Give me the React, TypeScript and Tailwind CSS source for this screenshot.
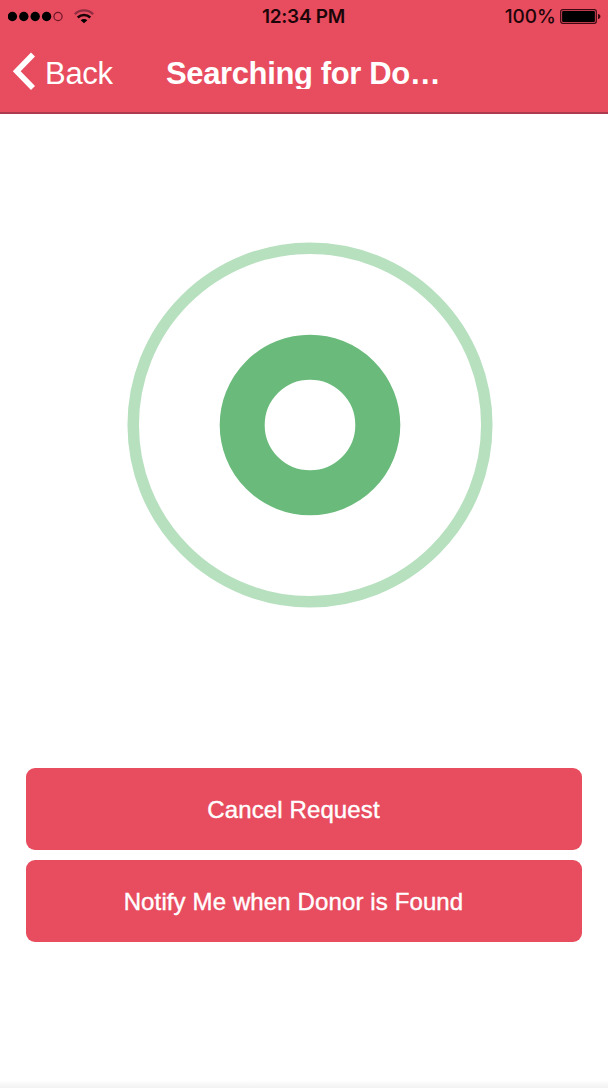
const StatusBar = () => (
  <div className="flex h-8 items-center pl-2 pr-[7px] font-['Inter',sans-serif] text-black">
    <div className="flex flex-1 items-center">
      <svg className="h-[11px] w-[56px]" viewBox="0 0 56 11">
        <circle cx="4.400" cy="5.500" r="4.700" />
        <circle cx="15.800" cy="5.500" r="4.700" />
        <circle cx="27.200" cy="5.500" r="4.700" />
        <circle cx="38.600" cy="5.500" r="4.700" />
        <circle cx="50" cy="5.500" r="4.100" fill="none" stroke="#6d1428" strokeWidth="1.200" />
      </svg>
      <svg className="ml-[10px] h-[15px] w-5" viewBox="0 0 20 15" fill="none">
        <path d="M.8 5.200a13.200 13.200 0 0 1 18.400 0" stroke="#902c40" strokeWidth="2.200" />
        <path d="M3.700 8.500a9 9 0 0 1 12.600 0" stroke="#1c0408" strokeWidth="2.500" />
        <path d="M6.700 11.300a4.700 4.700 0 0 1 6.600 0L10 14.300z" fill="#000" />
      </svg>
    </div>
    <div className="mr-[2px] mt-[2px] text-[19px] font-semibold tracking-[-0.3px] text-[#1c0508]">12:34 PM</div>
    <div className="flex flex-1 items-center justify-end">
      <span className="mt-[2px] text-[19px] font-medium text-[#1c0508]">100%</span>
      <svg className="ml-1 h-[15px] w-[41px]" viewBox="0 0 41 15">
        <rect x=".7" y=".7" width="35.600" height="13.600" rx="2" fill="none" stroke="#3c0913" strokeWidth="1.200" />
        <rect x="2.100" y="2.100" width="32.800" height="10.800" rx="1" />
        <path d="M38 5v5c1.600-.3 2.400-1.200 2.400-2.500S39.600 5.300 38 5z" fill="#3c0913" />
      </svg>
    </div>
  </div>
);

const NavBar = () => (
  <div className="flex h-20 items-center pl-3 text-white">
    <button className="flex w-[153px] items-center">
      <svg className="h-10 w-6" viewBox="0 0 24 40" fill="none" stroke="currentColor" strokeWidth="5.600">
        <path d="M21 2.500 4.700 19.200 21 36" />
      </svg>
      <span className="ml-[9px] mt-[3px] text-[31px] leading-9 tracking-[-0.3px]">Back</span>
    </button>
    <h1 className="h-[34px] w-[278px] overflow-hidden whitespace-nowrap pl-[1px] text-[31px] font-bold leading-[38px] tracking-[-0.37px]">
      Searching for Do…
    </h1>
  </div>
);

const Pulse = () => (
  <svg className="ml-[127px] mt-[128px] h-[366px] w-[366px]" viewBox="0 0 366 366" fill="none">
    <circle cx="183" cy="183" r="176.800" stroke="#b7e0bf" strokeWidth="11.500" />
    <circle cx="183" cy="183" r="67.800" stroke="#6abb7b" strokeWidth="45" />
  </svg>
);

const ActionButton = ({ label }: { label: string }) => (
  <button className="flex h-[82px] items-center justify-center rounded-[9px] bg-[#e84c5f] pr-[21px] pt-[2px] text-2xl tracking-[0.12px] text-white [-webkit-text-stroke:0.4px_white]">
    {label}
  </button>
);

const App = () => {
  return (
    <div className="flex h-[1088px] w-[608px] flex-col overflow-hidden bg-white font-['Liberation_Sans',Arial,sans-serif]">
      <header className="h-[114px] border-b-2 border-[#ad3b50] bg-[#e84c5f]">
        <StatusBar />
        <NavBar />
      </header>
      <main className="flex flex-1 flex-col">
        <Pulse />
        <div className="mt-40 flex flex-col gap-[10px] px-[26px]">
          <ActionButton label="Cancel Request" />
          <ActionButton label="Notify Me when Donor is Found" />
        </div>
      </main>
      <div className="h-2 bg-linear-to-b from-white to-[#f2f2f2]" />
    </div>
  );
};

export default App;
